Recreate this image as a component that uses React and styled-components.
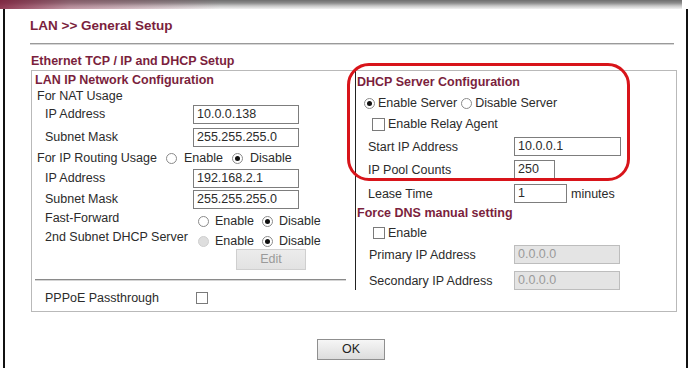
import React from "react";
import styled, { createGlobalStyle } from "styled-components";

const GlobalStyle = createGlobalStyle`
  html, body {
    margin: 0;
    padding: 0;
    background: #fff;
  }
  body {
    font-family: "Liberation Sans", Arial, sans-serif;
    font-size: 12.5px;
    color: #2b2b2b;
  }
`;

const MAROON = "#7b1f3d";

const Page = styled.div`
  position: relative;
  width: 690px;
  height: 368px;
  overflow: hidden;
  background: #fff;
`;

const TopBar = styled.div`
  width: 682px;
  height: 9px;
  background:
    linear-gradient(to right, rgba(128, 28, 58, 0.85) 0, rgba(150, 70, 95, 0.5) 70px, rgba(255, 255, 255, 0) 220px),
    linear-gradient(to bottom, #6e6e6e 0, #8c8c8c 3px, #c9c9c9 6px, #f2f2f2 9px);
`;

const Frame = styled.div`
  margin: 0 2px 0 3px;
  height: 359px;
  border-left: 2px solid #111;
  border-right: 2px solid #111;
  padding: 0 10px 0 25px;
  display: flex;
  flex-direction: column;
`;

const Title = styled.div`
  margin-top: 8px;
  padding-bottom: 8px;
  margin-right: 2px;
  border-bottom: 1px solid #9a9a9a;
  box-shadow: 0 1px 0 #d6d6d6;
  font-size: 13.5px;
  font-weight: bold;
  line-height: 18px;
  color: ${MAROON};
`;

const SectionTitle = styled.div`
  margin-top: 9px;
  padding-left: 1px;
  font-weight: bold;
  font-size: 12.5px;
  line-height: 16px;
  color: ${MAROON};
`;

const Box = styled.div`
  margin-top: 1px;
  margin-left: 1px;
  width: 644px;
  height: 240px;
  border: 1px solid #b9b9b9;
  display: grid;
  grid-template-columns: 323px 1fr;
  align-items: start;
`;

const LeftCol = styled.div`
  display: flex;
  flex-direction: column;
  padding-left: 3px;
`;

const RightCol = styled.div`
  height: 219px;
  border-left: 1px solid #222;
  display: flex;
  flex-direction: column;
  padding-left: 1px;
`;

const Heading = styled.div`
  margin-top: ${(p) => p.$mt || 0}px;
  font-weight: bold;
  line-height: 16px;
  color: ${MAROON};
`;

const Row = styled.div`
  display: flex;
  align-items: ${(p) => p.$align || "center"};
  height: ${(p) => p.$h || 19}px;
  margin-top: ${(p) => p.$mt || 0}px;
  padding-left: ${(p) => p.$indent || 0}px;
  line-height: 16px;
  white-space: nowrap;
`;

const Label = styled.span`
  width: ${(p) => p.$w}px;
  flex: none;
  padding-top: ${(p) => p.$pt || 0}px;
`;

const Field = styled.div`
  box-sizing: border-box;
  width: ${(p) => p.$w}px;
  height: ${(p) => p.$h || 19}px;
  border: 1px solid ${(p) => (p.$disabled ? "#bdbdbd" : "#7d7d7d")};
  background: ${(p) => (p.$disabled ? "#e4e4e4" : "#fff")};
  color: ${(p) => (p.$disabled ? "#9a9a9a" : "#2b2b2b")};
  padding-left: 3px;
  line-height: 17px;
  flex: none;
`;

const Suffix = styled.span`
  margin-left: 4px;
`;

const Choices = styled.div`
  display: flex;
  align-items: center;
  padding-top: ${(p) => p.$pt || 0}px;
`;

const RadioDot = styled.span`
  box-sizing: border-box;
  width: 11px;
  height: 11px;
  border-radius: 50%;
  border: 1px solid ${(p) => (p.$disabled ? "#cfcfcf" : "#8a8a8a")};
  background: ${(p) => (p.$disabled ? "#dedede" : "#fff")};
  margin-left: ${(p) => p.$ml || 0}px;
  margin-right: ${(p) => p.$mr || 6}px;
  display: inline-flex;
  align-items: center;
  justify-content: center;
  flex: none;

  &::after {
    content: "";
    width: 5px;
    height: 5px;
    border-radius: 50%;
    background: #111;
    display: ${(p) => (p.$checked ? "block" : "none")};
  }
`;

const Check = styled.span`
  box-sizing: border-box;
  width: ${(p) => p.$size || 12}px;
  height: ${(p) => p.$size || 12}px;
  border: 1px solid #7a7a7a;
  background: #fff;
  margin-right: 3px;
  flex: none;
`;

const GrayButton = styled.div`
  box-sizing: border-box;
  width: 70px;
  height: 21px;
  margin-left: 201px;
  border: 1px solid #cfcfcf;
  background: linear-gradient(#ececec, #e2e2e2);
  color: #9a9a9a;
  text-align: center;
  line-height: 19px;
`;

const Divider = styled.div`
  margin-top: 9px;
  width: 311px;
  height: 0;
  border-top: 1px solid #8a8a8a;
  border-bottom: 1px solid #d4d4d4;
`;

const Footer = styled.div`
  display: flex;
  justify-content: center;
  margin-top: 27px;
  width: 646px;
`;

const OkButton = styled.div`
  box-sizing: border-box;
  width: 68px;
  height: 21px;
  margin-left: -4px;
  border: 1px solid #8f8f8f;
  background: linear-gradient(#f6f6f6, #dcdcdc);
  text-align: center;
  line-height: 19px;
  color: #222;
`;

const Highlight = styled.div`
  position: absolute;
  left: 347px;
  top: 63px;
  width: 283px;
  height: 118px;
  box-sizing: border-box;
  border: 3px solid #d8141a;
  border-radius: 22px;
  pointer-events: none;
`;

const Radio = ({ checked, disabled, ml, mr, children }) => (
  <>
    <RadioDot $checked={checked} $disabled={disabled} $ml={ml} $mr={mr} />
    <span>{children}</span>
  </>
);

export default function App() {
  return (
    <>
      <GlobalStyle />
      <Page>
        <TopBar />
        <Frame>
          <Title>LAN &gt;&gt; General Setup</Title>
          <SectionTitle>Ethernet TCP / IP and DHCP Setup</SectionTitle>
          <Box>
            <LeftCol>
              <Heading $mt={1}>LAN IP Network Configuration</Heading>
              <Row $h={16} $indent={2}>For NAT Usage</Row>
              <Row $h={20} $indent={10}>
                <Label $w={148}>IP Address</Label>
                <Field $w={106}>10.0.0.138</Field>
              </Row>
              <Row $h={20} $mt={3} $indent={10}>
                <Label $w={148}>Subnet Mask</Label>
                <Field $w={106}>255.255.255.0</Field>
              </Row>
              <Row $h={18} $mt={2} $indent={2}>
                <span>For IP Routing Usage</span>
                <Radio ml={9} mr={7}>Enable</Radio>
                <Radio checked ml={9} mr={7}>Disable</Radio>
              </Row>
              <Row $h={20} $mt={1} $indent={10}>
                <Label $w={148}>IP Address</Label>
                <Field $w={106}>192.168.2.1</Field>
              </Row>
              <Row $h={20} $mt={1} $indent={10}>
                <Label $w={148}>Subnet Mask</Label>
                <Field $w={106}>255.255.255.0</Field>
              </Row>
              <Row $h={20} $indent={10} $align="flex-start">
                <Label $w={153} $pt={1}>Fast-Forward</Label>
                <Choices $pt={4}>
                  <Radio>Enable</Radio>
                  <Radio checked ml={8}>Disable</Radio>
                </Choices>
              </Row>
              <Row $h={20} $indent={10} $align="flex-start">
                <Label $w={153} $pt={0}>2nd Subnet DHCP Server</Label>
                <Choices $pt={4}>
                  <Radio disabled>Enable</Radio>
                  <Radio checked ml={8}>Disable</Radio>
                </Choices>
              </Row>
              <GrayButton>Edit</GrayButton>
              <Divider />
              <Row $h={18} $mt={8} $indent={10}>
                <Label $w={151}>PPPoE Passthrough</Label>
                <Check $size={12} />
              </Row>
            </LeftCol>

            <RightCol>
              <Heading $mt={3}>DHCP Server Configuration</Heading>
              <Row $h={18} $mt={4} $indent={7}>
                <Radio checked mr={3}>Enable Server</Radio>
                <Radio ml={4} mr={3}>Disable Server</Radio>
              </Row>
              <Row $h={18} $mt={3} $indent={15}>
                <Check $size={13} />
                <span>Enable Relay Agent</span>
              </Row>
              <Row $h={19} $mt={4} $indent={11}>
                <Label $w={146}>Start IP Address</Label>
                <Field $w={107}>10.0.0.1</Field>
              </Row>
              <Row $h={20} $mt={4} $indent={11}>
                <Label $w={146}>IP Pool Counts</Label>
                <Field $w={41} $h={20}>250</Field>
              </Row>
              <Row $h={19} $mt={4} $indent={11}>
                <Label $w={146}>Lease Time</Label>
                <Field $w={53}>1</Field>
                <Suffix>minutes</Suffix>
              </Row>
              <Heading $mt={2}>Force DNS manual setting</Heading>
              <Row $h={18} $mt={3} $indent={16}>
                <Check $size={12} />
                <span>Enable</span>
              </Row>
              <Row $h={19} $mt={3} $indent={12}>
                <Label $w={145}>Primary IP Address</Label>
                <Field $w={106} $disabled>0.0.0.0</Field>
              </Row>
              <Row $h={19} $mt={7} $indent={12}>
                <Label $w={145}>Secondary IP Address</Label>
                <Field $w={106} $disabled>0.0.0.0</Field>
              </Row>
            </RightCol>
          </Box>
          <Footer>
            <OkButton>OK</OkButton>
          </Footer>
        </Frame>
        <Highlight />
      </Page>
    </>
  );
}
